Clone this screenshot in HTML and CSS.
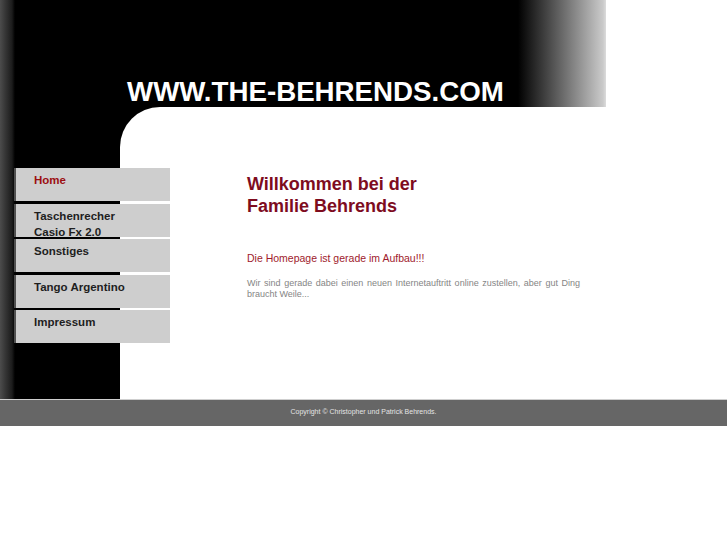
FILE: index.html
```html
<!DOCTYPE html>
<html lang="de">
<head>
<meta charset="utf-8">
<title>WWW.THE-BEHRENDS.COM</title>
<link rel="stylesheet" href="styles.css">
</head>
<body>
<div class="page">
  <header class="top">
    <h1 class="logo">WWW.THE-BEHRENDS.COM</h1>
  </header>
  <div class="body">
    <aside class="side">
      <nav class="nav">
        <a class="item active" href="#">Home</a>
        <a class="item" href="#">Taschenrecher Casio Fx 2.0</a>
        <a class="item" href="#">Sonstiges</a>
        <a class="item" href="#">Tango Argentino</a>
        <a class="item" href="#">Impressum</a>
      </nav>
    </aside>
    <main class="main">
      <h2 class="title">Willkommen bei der<br>Familie Behrends</h2>
      <p class="notice">Die Homepage ist gerade im Aufbau!!!</p>
      <p class="text">Wir sind gerade dabei einen neuen Internetauftritt online zustellen, aber gut Ding braucht Weile...</p>
    </main>
  </div>
</div>
<footer class="foot">Copyright © Christopher und Patrick Behrends.</footer>
</body>
</html>
```

FILE: styles.css
```css
html, body {
  margin: 0;
  padding: 0;
  background: #fff;
  font-family: "Liberation Sans", Arial, Helvetica, sans-serif;
}

.page {
  width: 606px;
  background: linear-gradient(to right, #4c4c4c 0, #333 6px, #1c1c1c 12px, #000 15px, #000 518px, #cacaca 603px, #dcdcdc 606px);
}

.top {
  height: 107px;
  display: flex;
  align-items: flex-end;
}

.logo {
  margin: 0;
  padding-left: 127px;
  font-size: 27.7px;
  line-height: 31px;
  font-weight: bold;
  color: #fff;
  white-space: nowrap;
}

.body {
  display: flex;
  height: 292px;
}

.side {
  width: 120px;
  flex: none;
}

.nav {
  position: relative;
  z-index: 1;
  width: 156px;
  margin: 61px 0 0 14px;
  display: flex;
  flex-direction: column;
  gap: 2.5px;
}

.item {
  display: block;
  box-sizing: border-box;
  height: 33px;
  padding: 4px 36px 0 18px;
  background: #cecece;
  border-left: 2px solid #505050;
  color: #1e1e1e;
  font-size: 11.5px;
  line-height: 16px;
  font-weight: bold;
  text-decoration: none;
}

.item.active {
  color: #9c0f12;
}

.main {
  flex: 1;
  background: #fff;
  border-top-left-radius: 40px;
  padding: 67px 26px 0 127px;
}

.title {
  margin: 0;
  font-size: 18px;
  line-height: 21.6px;
  font-weight: bold;
  color: #7e0c1e;
}

.notice {
  margin: 35px 0 0;
  font-size: 10.5px;
  line-height: 13px;
  color: #a01a2c;
}

.text {
  margin: 12.5px 0 0;
  width: 333px;
  font-size: 9px;
  line-height: 11px;
  color: #858585;
  text-align: justify;
}

.foot {
  border-top: 1px solid #cfcfcf;
  background: #666;
  height: 27px;
  box-sizing: border-box;
  padding-bottom: 2px;
  line-height: 24px;
  font-size: 7px;
  color: #e4e4e4;
  text-align: center;
}
```
